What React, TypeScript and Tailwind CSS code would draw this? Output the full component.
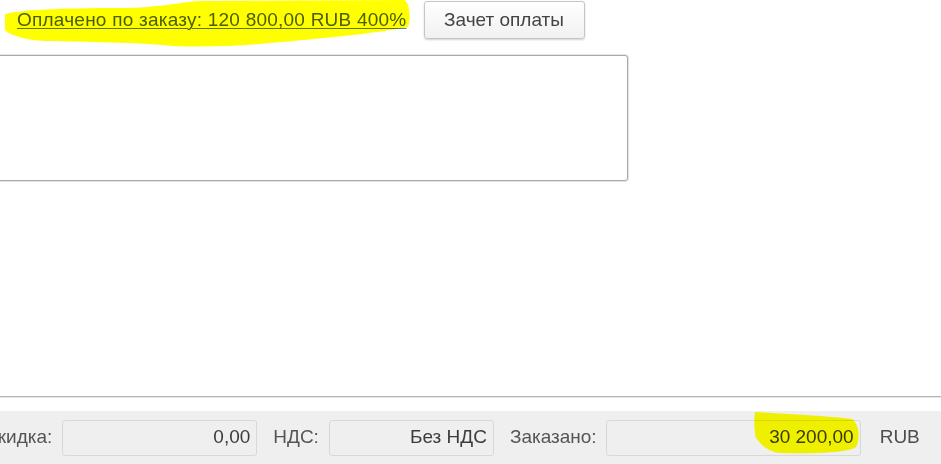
import React from "react";

const font = { fontFamily: '"Liberation Sans", Arial, sans-serif' };

export default function App() {
  return (
    <div className="relative flex h-[464px] w-[941px] flex-col overflow-hidden bg-white" style={font}>
      {/* header row */}
      <div className="flex h-[38px] items-center pl-[17px] mt-[1px]">
        <a className="text-[19px] leading-[22px] tracking-[0.23px] text-[#4a5fb0] underline underline-offset-[2px] decoration-[1px] decoration-[#5a7bd0]">
          Оплачено по заказу: 120 800,00 RUB 400%
        </a>
        <button className="ml-[17px] h-[38px] w-[161px] rounded-[3px] border border-[#c6c6c6] bg-gradient-to-b from-white to-[#f1f1f1] text-[19px] text-[#444] shadow-[0_1px_2px_rgba(0,0,0,0.18)]">
          Зачет оплаты
        </button>
      </div>

      {/* comment box */}
      <div className="-ml-[4px] mt-[16px] h-[126px] w-[632px] rounded-[3px] border border-[#a9a9a9] bg-white shadow-[0_0_0_1px_#e4e4e4]"></div>

      <div className="flex-1"></div>

      {/* separator */}
      <div className="h-[2px] w-full border-t border-[#b4b4b4] bg-[#e8e8e8]"></div>
      <div className="h-[13px]"></div>

      {/* totals bar */}
      <div className="flex h-[53px] items-center bg-[#efefef] text-[19px]">
        <span className="-ml-[16px] text-[#555]">Скидка:</span>
        <div className="ml-[10px] flex h-[36px] w-[195px] items-center justify-end rounded-[3px] border border-[#d8d8d8] bg-[#efefef] pr-[6px] text-[#3c3c3c]">
          0,00
        </div>
        <span className="ml-[16px] text-[#555]">НДС:</span>
        <div className="ml-[10px] flex h-[36px] w-[165px] items-center justify-end rounded-[3px] border border-[#d8d8d8] bg-[#efefef] pr-[6px] text-[#3c3c3c]">
          Без НДС
        </div>
        <span className="ml-[16px] text-[#555]">Заказано:</span>
        <div className="ml-[9px] flex h-[36px] w-[255px] items-center justify-end rounded-[3px] border border-[#d8d8d8] bg-[#efefef] pr-[6px] text-[#3c3c3c]">
          30 200,00
        </div>
        <span className="ml-[19px] text-[#4d4d4d]">RUB</span>
      </div>

      {/* marker highlights */}
      <svg className="pointer-events-none absolute left-0 top-0 mix-blend-multiply" width="941" height="464">
        <path
          d="M5,14 C20,10 60,8 120,8 C160,8 180,2 200,1 L404,0 C410,2 411,20 408,27 C384,32 344,36 304,40 C262,44 222,48 172,46 C140,42 80,42 50,41 C30,41 10,36 5,30 Z"
          fill="#ffff00"
        />
        <path
          d="M755,412 C790,414 830,416 852,419 C860,425 860,440 856,447 C850,452 820,454 780,453 C770,452 762,446 756,438 C754,430 754,420 755,412 Z"
          fill="#ffff00"
        />
      </svg>
    </div>
  );
}
